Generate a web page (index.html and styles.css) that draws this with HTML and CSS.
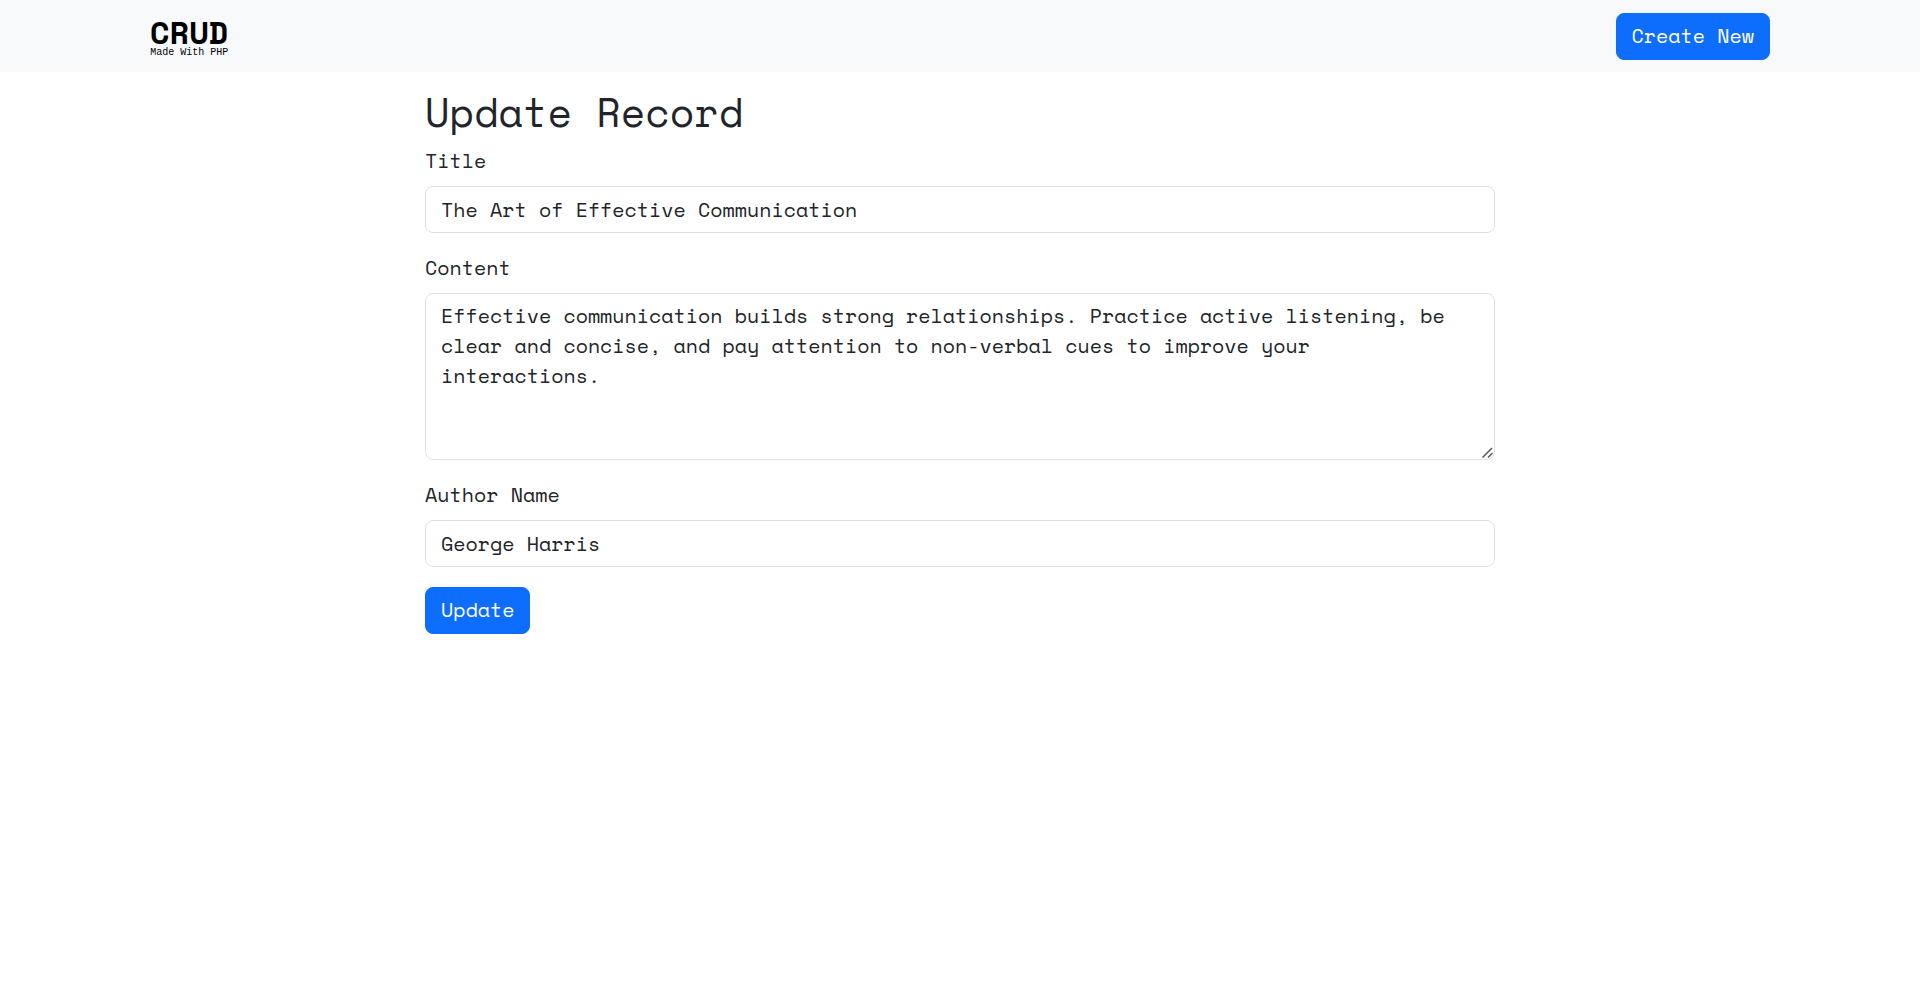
FILE: index.html
```html
<!DOCTYPE html>
<html lang="en">
<head>
  <meta charset="utf-8">
  <meta name="viewport" content="width=device-width, initial-scale=1">
  <title>Update Record</title>
  <link rel="stylesheet" href="styles.css">
</head>
<body>
  <nav class="navbar">
    <div class="container navbar-inner">
      <a class="brand" href="#">
        <span class="brand-name">CRUD</span>
        <span class="brand-tagline">Made With PHP</span>
      </a>
      <button class="btn" type="button">Create New</button>
    </div>
  </nav>
  <main class="container">
    <form class="record-form">
      <h1 class="title">Update Record</h1>
      <div class="field">
        <label for="title">Title</label>
        <input class="control" id="title" type="text" value="The Art of Effective Communication">
      </div>
      <div class="field">
        <label for="content">Content</label>
        <textarea class="control control-area" id="content" spellcheck="false">Effective communication builds strong relationships. Practice active listening, be clear and concise, and pay attention to non-verbal cues to improve your interactions.</textarea>
      </div>
      <div class="field">
        <label for="author">Author Name</label>
        <input class="control" id="author" type="text" value="George Harris">
      </div>
      <button class="btn" type="submit">Update</button>
    </form>
  </main>
</body>
</html>
```
FILE: styles.css
```css
*,
*::before,
*::after {
  box-sizing: border-box;
}

body {
  margin: 0;
  background: #fff;
  color: #212529;
  font-family: "Space Mono", "Liberation Mono", monospace;
  font-size: 20px;
  line-height: 30px;
}

.container {
  width: 100%;
  max-width: 1650px;
  margin: 0 auto;
  padding: 0 15px;
}

.navbar {
  background: #f8f9fa;
  padding: 13px 0 12px;
}

.navbar-inner {
  display: flex;
  align-items: center;
  justify-content: space-between;
}

.brand {
  display: flex;
  flex-direction: column;
  align-items: center;
  color: #000;
  text-decoration: none;
}

.brand-name {
  font-size: 32px;
  font-weight: 700;
  line-height: 32px;
}

.brand-tagline {
  font-family: "Liberation Mono", monospace;
  font-size: 10px;
  line-height: 10px;
}

.btn {
  height: 47px;
  padding: 7px 15px 8px;
  border: 1px solid #0d6efd;
  border-radius: 8px;
  background: #0d6efd;
  color: #fff;
  font: inherit;
  cursor: pointer;
}

.record-form {
  max-width: 1070px;
  margin: 0 auto;
  padding: 16px 0;
}

.title {
  margin: 0 0 10px;
  font-size: 40px;
  font-weight: 400;
  line-height: 48px;
}

.field {
  display: flex;
  flex-direction: column;
  gap: 10px;
  margin-bottom: 20px;
}

.control {
  width: 100%;
  height: 47px;
  padding: 7px 15px 8px;
  border: 1px solid #dee2e6;
  border-radius: 8px;
  background: #fff;
  color: inherit;
  font: inherit;
}

.control-area {
  height: 167px;
  resize: vertical;
}

.control-area::-webkit-resizer {
  background: url("data:image/svg+xml,%3Csvg xmlns='http://www.w3.org/2000/svg' width='15' height='15'%3E%3Cpath d='M3.5 13.5 13 4M9 13.5l4.500-4.500' stroke='%23665f58' stroke-width='1.600'/%3E%3C/svg%3E") no-repeat right bottom;
}
```
